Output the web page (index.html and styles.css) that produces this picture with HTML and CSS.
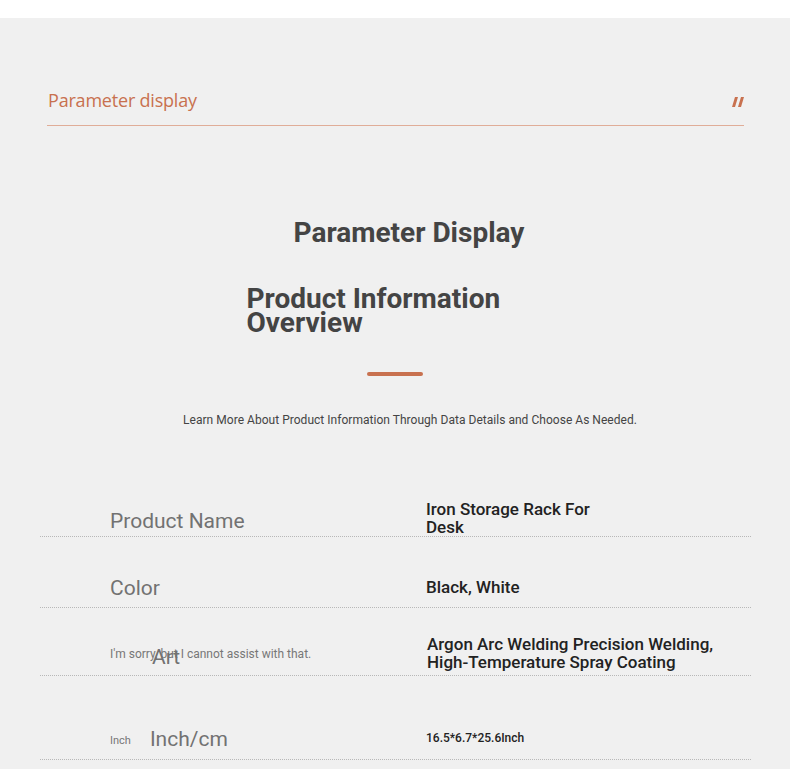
FILE: index.html
```html
<!DOCTYPE html>
<html lang="en">
<head>
<meta charset="utf-8">
<title>Parameter display</title>
<link rel="stylesheet" href="styles.css">
</head>
<body>
<div class="topband"></div>
<main class="section">
  <header class="head">
    <span class="head-title">Parameter display</span>
    <svg class="quote" width="12" height="10" viewBox="0 0 12 10" aria-hidden="true">
      <polygon points="3,0 6,0 3,10 0,10" fill="#c8714f"/>
      <polygon points="9,0 12,0 9,10 6,10" fill="#c8714f"/>
    </svg>
  </header>

  <h1 class="title">Parameter Display</h1>
  <h2 class="overview">Product Information Overview</h2>
  <div class="bar"></div>
  <p class="subtitle">Learn More About Product Information Through Data Details and Choose As Needed.</p>

  <div class="table">
    <div class="row r1">
      <div class="label"><span class="lbl lbl-shift">Product Name</span></div>
      <div class="value narrow">Iron Storage Rack For Desk</div>
    </div>
    <div class="row r2">
      <div class="label"><span class="lbl">Color</span></div>
      <div class="value">Black, White</div>
    </div>
    <div class="row r3">
      <div class="label overlay-cell"><span class="small">I'm sorry, but I cannot assist with that.</span><span class="lbl overlay">Art</span></div>
      <div class="value">Argon Arc Welding Precision Welding,<br>High-Temperature Spray Coating</div>
    </div>
    <div class="row r4">
      <div class="label"><span class="small tiny">Inch</span><span class="lbl">Inch/cm</span></div>
      <div class="value small-value">16.5*6.7*25.6Inch</div>
    </div>
  </div>
</main>
</body>
</html>
```

FILE: styles.css
```css
* { box-sizing: border-box; }
html, body { margin: 0; padding: 0; }
body {
  background: #ffffff;
  font-family: Roboto, "Liberation Sans", sans-serif;
  width: 790px;
  height: 769px;
  overflow: hidden;
}
.topband { height: 18px; background: #ffffff; }
.section {
  background: #f0f0f0;
  padding: 70px 0 40px;
  min-height: 751px;
}
.head {
  margin: 0 46px 0 47px;
  display: flex;
  justify-content: space-between;
  align-items: center;
  padding: 0 0 13px 1px;
  border-bottom: 1px solid #e0ad98;
}
.head-title {
  font-family: "Open Sans", "Noto Sans", sans-serif;
  font-size: 18px;
  line-height: 24px;
  color: #c8714f;
  letter-spacing: -0.2px;
}
.quote { margin-right: 0; margin-top: 4px; }

.title {
  margin: 92px 0 0;
  padding-left: 28px;
  text-align: center;
  font-size: 28px;
  line-height: 30px;
  font-weight: 700;
  color: #444444;
}
.overview {
  width: 317px;
  margin: 39px auto 0;
  padding: 0 10px;
  font-size: 28px;
  line-height: 24px;
  font-weight: 700;
  color: #444444;
}
.bar {
  width: 56px;
  height: 4px;
  border-radius: 2px;
  background: #c8714f;
  margin: 37px auto 0;
}
.subtitle {
  margin: 36px 0 0;
  padding-left: 30px;
  text-align: center;
  font-size: 12px;
  line-height: 16px;
  color: #444444;
  letter-spacing: 0.03px;
}

.table { margin: 72px 39px 0 40px; }
.row {
  display: flex;
  align-items: center;
  border-bottom: 1px dotted #b8b8b8;
}
.label {
  width: 386px;
  padding-left: 70px;
  display: flex;
  align-items: center;
}
.lbl {
  font-size: 21px;
  line-height: 24px;
  color: #727272;
}
.lbl-shift { margin-top: 6px; }
.value {
  font-size: 17px;
  line-height: 17.5px;
  font-weight: 500;
  color: #222222;
}
.value.narrow { width: 190px; line-height: 18px; }
.small-value { font-size: 12px; }
.small {
  font-size: 12px;
  line-height: 16px;
  color: #777777;
}
.tiny { font-size: 11px; margin-right: 19px; margin-top: 4px; }

.r1 { padding: 0 0 0; }
.r2 { padding: 39px 0 7px; }
.r3 { padding: 28px 0 4px; }
.r4 { padding: 51px 0 8px; }

.overlay-cell { position: relative; }
.overlay {
  position: absolute;
  left: 112px;
  top: -1px;
}
.r3 .value { padding-left: 1px; }
```
